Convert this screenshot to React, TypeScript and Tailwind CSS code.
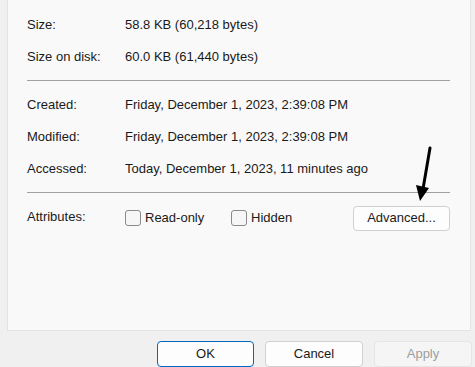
import React from "react";

const rows1 = [
    { label: "Size:", value: "58.8 KB (60,218 bytes)" },
    { label: "Size on disk:", value: "60.0 KB (61,440 bytes)" },
];

const rows2 = [
    { label: "Created:", value: "Friday, December 1, 2023, 2:39:08 PM" },
    { label: "Modified:", value: "Friday, December 1, 2023, 2:39:08 PM" },
    { label: "Accessed:", value: "Today, December 1, 2023, 11 minutes ago" },
];

function Row({ label, value }: { label: string; value: string }) {
    return (
        <div className="flex items-center h-8 pt-[1px]">
            <div className="w-[98px] shrink-0">{label}</div>
            <div>{value}</div>
        </div>
    );
}

function Checkbox({ label }: { label: string }) {
    return (
        <label className="flex items-center gap-[4px]">
            <span className="w-[16px] h-[16px] rounded-[3px] border border-[#8a8a8a] bg-[#f6f6f6]" />
            <span>{label}</span>
        </label>
    );
}

export default function App() {
    return (
        <div
            className="relative w-[475px] h-[367px] bg-[#f0f0f0] overflow-hidden text-[13px] text-[#1a1a1a]"
            style={{ fontFamily: '"Liberation Sans", Arial, sans-serif' }}
        >
            <div className="ml-[7px] w-[464px] h-[331px] bg-[#f9f9f9] border-l border-r border-b border-[#e3e3e3] pl-[19px] pr-[20px] pt-[8px]">
                {rows1.map((r) => (
                    <Row key={r.label} {...r} />
                ))}
                <div className="mt-2 mb-[7px] h-px bg-[#a0a0a0] w-[423px]" />
                {rows2.map((r) => (
                    <Row key={r.label} {...r} />
                ))}
                <div className="mt-2 mb-[9px] h-px bg-[#a0a0a0] w-[423px]" />
                <div className="flex items-center h-8">
                    <div className="w-[98px] shrink-0 -mt-[3px]">Attributes:</div>
                    <div className="w-[106px] shrink-0">
                        <Checkbox label="Read-only" />
                    </div>
                    <Checkbox label="Hidden" />
                    <button className="ml-auto w-[97px] h-[25px] rounded-[4px] border border-[#d0d0d0] bg-[#fdfdfd] text-[#1a1a1a]">
                        Advanced...
                    </button>
                </div>
            </div>

            <div className="flex justify-end gap-[11px] pr-[3px] mt-[10px]">
                <button className="w-[97px] h-[26px] rounded-[4px] border border-[#0067c0] bg-[#fdfdfd] text-[#1a1a1a]">
                    OK
                </button>
                <button className="w-[98px] h-[26px] rounded-[4px] border border-[#d0d0d0] bg-[#fdfdfd] text-[#1a1a1a]">
                    Cancel
                </button>
                <button className="w-[98px] h-[26px] rounded-[4px] border border-[#e5e5e5] bg-[#f5f5f5] text-[#9d9d9d]">
                    Apply
                </button>
            </div>

            {/* annotation arrow */}
            <svg className="absolute left-[412px] top-[145px]" width="24" height="60" viewBox="0 0 24 60">
                <line x1="18" y1="3" x2="11" y2="44" stroke="#000" strokeWidth="3" strokeLinecap="round" />
                <polygon points="4,40 17,43 8,56" fill="#000" />
            </svg>
        </div>
    );
}
